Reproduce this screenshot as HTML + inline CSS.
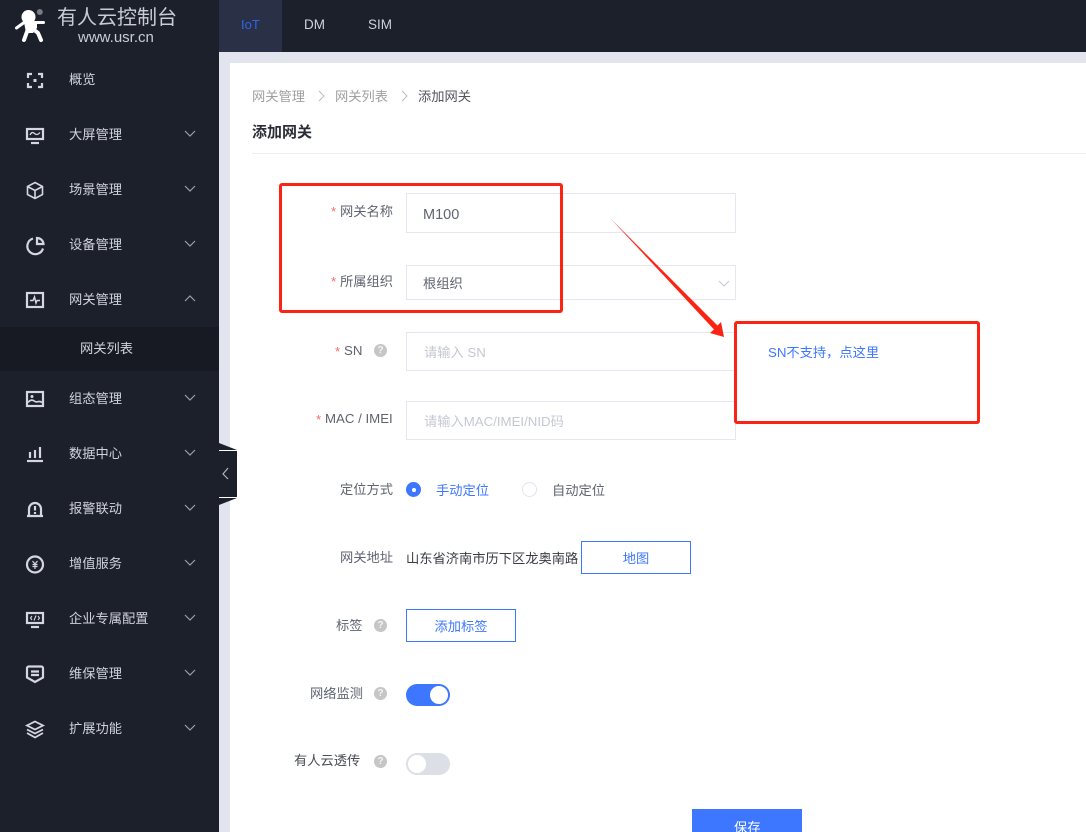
<!DOCTYPE html>
<html lang="zh"><head><meta charset="utf-8"><title>添加网关</title>
<style>
html,body{margin:0;padding:0;width:1086px;height:832px;overflow:hidden;background:#e2e5ed}
body{position:relative;font-family:"Liberation Sans","Noto Sans CJK SC",sans-serif;font-size:13.25px}
.a{position:absolute;white-space:nowrap;line-height:20px;height:20px;transform:translateY(1px)}
.b{position:absolute;box-sizing:border-box}
.m{color:#cfd2da;left:69px}
.l{color:#5f6470}
.s{color:#f56c6c}
.i{position:absolute;box-sizing:border-box;border:1px solid #e4e7ef;background:#fff}
.q{position:absolute;width:13px;height:13px;border-radius:50%;background:#c6c6c6;color:#f4f4f4;font-size:10px;line-height:13px;text-align:center;font-weight:bold}
.btn{position:absolute;box-sizing:border-box;border:1px solid #3e77ff;color:#3e77ff;text-align:center;background:#fff}
svg{position:absolute;overflow:visible}
.ic{left:24px;width:22px;height:22px;fill:none;stroke:#d4d7e0;stroke-width:2.200}
.ch{left:184px;width:12px;height:7px;fill:none;stroke:#9a9fab;stroke-width:1.2}
.red{position:absolute;box-sizing:border-box;border:3px solid #fb2314;border-radius:3px}
</style></head><body>
<!-- sidebar + topbar -->
<div class="b" style="left:0;top:0;width:219px;height:832px;background:#1c202b"></div>
<div class="b" style="left:219px;top:0;width:867px;height:52px;background:#1c202b"></div>
<div class="b" style="left:219px;top:0;width:63px;height:52px;background:#2a3146"></div>
<div class="a" style="left:241px;top:14px;color:#2f66e8;font-size:13px">IoT</div>
<div class="a" style="left:304px;top:14px;color:#cfd2da;font-size:13.5px">DM</div>
<div class="a" style="left:368px;top:14px;color:#cfd2da;font-size:13.5px">SIM</div>
<!-- logo -->
<svg style="left:0;top:0" width="70" height="50" viewBox="0 0 70 50">
<circle cx="28.500" cy="17" r="7" fill="#fff"/><circle cx="39.800" cy="12" r="3" fill="#777b85"/>
<path d="M16.500 28L24 22.500H43.500" fill="none" stroke="#fff" stroke-width="3" stroke-linecap="round"/>
<path d="M24 22H37V28L33 33L26 33Z" fill="#fff"/>
<path d="M28 29L24 40M33 29L38 33L41 40" fill="none" stroke="#fff" stroke-width="4" stroke-linecap="round"/>
</svg>
<div class="a" style="left:57px;top:5px;color:#c9ccd4;font-size:20px;line-height:24px;height:24px">有人云控制台</div>
<div class="a" style="left:78px;top:27px;color:#c9ccd4;font-size:15px">www.usr.cn</div>
<!-- menu -->
<div class="b" style="left:0;top:327px;width:219px;height:44px;background:#171a23"></div>
<div class="a m" style="top:69px">概览</div>
<div class="a m" style="top:124px">大屏管理</div>
<div class="a m" style="top:179px">场景管理</div>
<div class="a m" style="top:234px">设备管理</div>
<div class="a m" style="top:289px">网关管理</div>
<div class="a m" style="left:80px;top:338px">网关列表</div>
<div class="a m" style="top:388px">组态管理</div>
<div class="a m" style="top:443px">数据中心</div>
<div class="a m" style="top:498px">报警联动</div>
<div class="a m" style="top:553px">增值服务</div>
<div class="a m" style="top:608px">企业专属配置</div>
<div class="a m" style="top:663px">维保管理</div>
<div class="a m" style="top:718px">扩展功能</div>
<svg class="ch" style="top:130px" viewBox="0 0 12 7"><path d="M1 1L6 6L11 1"/></svg>
<svg class="ch" style="top:185px" viewBox="0 0 12 7"><path d="M1 1L6 6L11 1"/></svg>
<svg class="ch" style="top:240px" viewBox="0 0 12 7"><path d="M1 1L6 6L11 1"/></svg>
<svg class="ch" style="top:295px" viewBox="0 0 12 7"><path d="M1 6L6 1L11 6"/></svg>
<svg class="ch" style="top:394px" viewBox="0 0 12 7"><path d="M1 1L6 6L11 1"/></svg>
<svg class="ch" style="top:449px" viewBox="0 0 12 7"><path d="M1 1L6 6L11 1"/></svg>
<svg class="ch" style="top:504px" viewBox="0 0 12 7"><path d="M1 1L6 6L11 1"/></svg>
<svg class="ch" style="top:559px" viewBox="0 0 12 7"><path d="M1 1L6 6L11 1"/></svg>
<svg class="ch" style="top:614px" viewBox="0 0 12 7"><path d="M1 1L6 6L11 1"/></svg>
<svg class="ch" style="top:669px" viewBox="0 0 12 7"><path d="M1 1L6 6L11 1"/></svg>
<svg class="ch" style="top:724px" viewBox="0 0 12 7"><path d="M1 1L6 6L11 1"/></svg>
<!-- icons -->
<svg class="ic" style="top:70px" viewBox="0 0 22 22"><path d="M8 4H4V8M14 4H18V8M8 17H4V13M14 17H18V13"/><rect x="9.500" y="9" width="3" height="3" fill="#d4d7e0" stroke="none"/></svg>
<svg class="ic" style="top:124px" viewBox="0 0 22 22"><rect x="3" y="5" width="16" height="10"/><path d="M6 11C7.500 8 9 8 10.500 9.500S14 11 16 8.500" stroke-width="1.300"/><path d="M7 19H15"/></svg>
<svg class="ic" style="top:179px" viewBox="0 0 22 22"><path d="M11 3.500L18.500 7.500V15.500L11 19.500L3.500 15.500V7.500ZM3.500 7.500L11 11.500L18.500 7.500M11 11.500V19.500" stroke-width="1.600"/></svg>
<svg class="ic" style="top:234px" viewBox="0 0 22 22"><path d="M9 4.500A8 8 0 1 0 19 14.500"/><path d="M13 4A6.500 6.500 0 0 1 19.500 10H13Z"/></svg>
<svg class="ic" style="top:289px" viewBox="0 0 22 22"><rect x="3" y="4" width="16" height="14"/><path d="M6 11.500H9L10.500 8L12 14L13 11.500H16" stroke-width="1.500"/></svg>
<svg class="ic" style="top:388px" viewBox="0 0 22 22"><rect x="3" y="4" width="16" height="14"/><circle cx="8" cy="8.500" r="1.500" fill="#d4d7e0" stroke="none"/><path d="M4 14.500C7 11 9 12 11 13.500S15 12 18 14.500" stroke-width="1.700"/></svg>
<svg class="ic" style="top:443px" viewBox="0 0 22 22"><path d="M3 18H19"/><path d="M6 15V9M11 15V7M16 15V4"/></svg>
<svg class="ic" style="top:498px" viewBox="0 0 22 22"><path d="M5 17.500V11A6 6 0 0 1 17 11V17.500M3 18H19"/><path d="M11 8V12.500M11 14V16"/></svg>
<svg class="ic" style="top:553px" viewBox="0 0 22 22"><circle cx="11" cy="11.500" r="8"/><path d="M8.500 8L11 11L13.500 8M8.500 11.500H13.500M8.500 13.500H13.500M11 11V16" stroke-width="1.200"/></svg>
<svg class="ic" style="top:608px" viewBox="0 0 22 22"><rect x="3" y="5" width="16" height="10"/><path d="M7 19H15"/><path d="M8 8L6.500 10L8 12M14 8L15.500 10L14 12M12 7.500L10 12.500" stroke-width="1.100"/></svg>
<svg class="ic" style="top:663px" viewBox="0 0 22 22"><path d="M3 5C3 4 4 3.500 5 3.500H17C18 3.500 19 4 19 5V14.500L11 19L3 14.500Z"/><path d="M7 8.500H15M7 12H15"/></svg>
<svg class="ic" style="top:718px" viewBox="0 0 22 22"><path d="M11 3.500L19 7.500L11 11.500L3 7.500Z" stroke-width="1.800"/><path d="M3 11.500L11 15.500L19 11.500M3 15L11 19.500L19 15" stroke-width="1.800"/></svg>
<!-- content -->
<div class="b" style="left:230px;top:63px;width:856px;height:769px;background:#fff"></div>
<!-- collapse handle -->
<div class="b" style="left:219px;top:451px;width:18px;height:46px;background:#1c202b"></div>
<div class="b" style="left:219px;top:450px;width:18px;height:1px;background:#fff"></div>
<div class="b" style="left:219px;top:497px;width:18px;height:1px;background:#fff"></div>
<svg style="left:219px;top:443px" width="18" height="62" viewBox="0 0 18 62"><path d="M0 0L18 7H0ZM0 62V55H18Z" fill="#1c202b"/><path d="M9 25L4 31L9 36" fill="none" stroke="#a9b4c8" stroke-width="1.200"/></svg>
<div class="a" style="left:252px;top:86px;color:#a0a0a0">网关管理</div>
<svg style="left:318px;top:90px;fill:none;stroke:#b8bcc5;stroke-width:1" width="7" height="12"><path d="M1 1L6 6L1 11"/></svg>
<div class="a" style="left:335px;top:86px;color:#a0a0a0">网关列表</div>
<svg style="left:401px;top:90px;fill:none;stroke:#b8bcc5;stroke-width:1" width="7" height="12"><path d="M1 1L6 6L1 11"/></svg>
<div class="a" style="left:418px;top:86px;color:#53565e">添加网关</div>
<div class="a" style="left:252px;top:122px;color:#2b2e36;font-weight:bold;font-size:15px">添加网关</div>
<div class="b" style="left:252px;top:153px;width:834px;height:1px;background:#eceef2"></div>
<!-- form -->
<div class="a s" style="left:331px;top:201px">*</div><div class="a l" style="left:340px;top:201px">网关名称</div>
<div class="i" style="left:406px;top:193px;width:330px;height:40px"></div>
<div class="a" style="left:423px;top:204px;color:#5f6470;font-size:14.5px">M100</div>
<div class="a s" style="left:331px;top:271px">*</div><div class="a l" style="left:340px;top:271px">所属组织</div>
<div class="i" style="left:406px;top:265px;width:330px;height:35px"></div>
<div class="a" style="left:423px;top:273px;color:#5f6470">根组织</div>
<svg style="left:718px;top:280px;fill:none;stroke:#c8ccd6;stroke-width:1.200" width="12" height="7"><path d="M1 1L6 6L11 1"/></svg>
<div class="a s" style="left:335px;top:341px">*</div><div class="a l" style="left:344px;top:340px">SN</div>
<div class="q" style="left:374px;top:344px">?</div>
<div class="i" style="left:406px;top:332px;width:330px;height:39px"></div>
<div class="a" style="left:424px;top:342px;color:#c4c8d2">请输入 SN</div>
<div class="a s" style="left:316px;top:409px">*</div><div class="a l" style="left:325px;top:408px">MAC / IMEI</div>
<div class="i" style="left:406px;top:401px;width:330px;height:39px"></div>
<div class="a" style="left:424px;top:411px;color:#c4c8d2">请输入MAC/IMEI/NID码</div>
<div class="a l" style="left:340px;top:479px">定位方式</div>
<div class="b" style="left:406px;top:482px;width:15px;height:15px;border-radius:50%;background:#3e77ff"></div>
<div class="b" style="left:412px;top:488px;width:4px;height:4px;border-radius:50%;background:#fff"></div>
<div class="a" style="left:436px;top:480px;color:#3e77ff">手动定位</div>
<div class="b" style="left:522px;top:482px;width:15px;height:15px;border-radius:50%;border:1px solid #e2e4ec"></div>
<div class="a l" style="left:552px;top:480px">自动定位</div>
<div class="a l" style="left:340px;top:547px">网关地址</div>
<div class="a" style="left:406px;top:548px;color:#3a3d45">山东省济南市历下区龙奥南路</div>
<div class="btn" style="left:581px;top:541px;width:110px;height:33px;line-height:33px">地图</div>
<div class="a l" style="left:336px;top:615px">标签</div>
<div class="q" style="left:374px;top:619px">?</div>
<div class="btn" style="left:406px;top:609px;width:110px;height:33px;line-height:33px">添加标签</div>
<div class="a l" style="left:310px;top:683px">网络监测</div>
<div class="q" style="left:374px;top:687px">?</div>
<div class="b" style="left:406px;top:684px;width:44px;height:22px;border-radius:11px;background:#3e77ff"></div>
<div class="b" style="left:430px;top:686px;width:18px;height:18px;border-radius:50%;background:#fff"></div>
<div class="a" style="left:294px;top:750px;color:#4a4d55">有人云透传</div>
<div class="q" style="left:374px;top:755px">?</div>
<div class="b" style="left:406px;top:753px;width:44px;height:22px;border-radius:11px;background:#dcdfe6"></div>
<div class="b" style="left:408px;top:755px;width:18px;height:18px;border-radius:50%;background:#fff"></div>
<div class="b" style="left:692px;top:809px;width:110px;height:23px;background:#3e77ff;overflow:hidden"></div>
<div class="a" style="left:734px;top:817px;color:#fff">保存</div>
<!-- annotations -->
<div class="red" style="left:279px;top:183px;width:284px;height:130px"></div>
<div class="red" style="left:734px;top:321px;width:246px;height:103px"></div>
<svg style="left:0;top:0" width="1086" height="832" viewBox="0 0 1086 832"><path d="M610 218L717.500 325.500L721 322L724 337L710 333L714 329.500Z" fill="#fb2314"/></svg>
<div class="a" style="left:768px;top:342px;color:#3e77ff">SN不支持，点这里</div>
</body></html>
